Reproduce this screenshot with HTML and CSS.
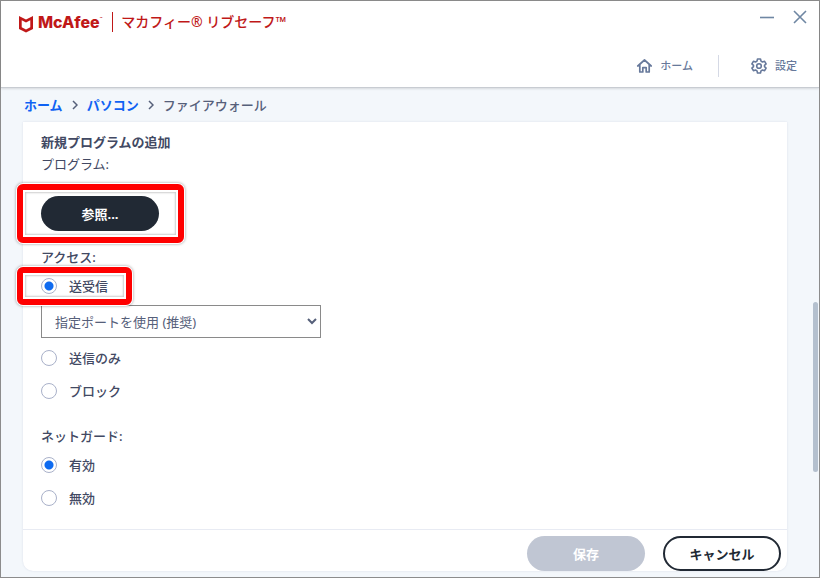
FILE: index.html
```html
<!DOCTYPE html>
<html lang="ja">
<head>
  <meta charset="UTF-8">
  <meta name="viewport" content="width=device-width, initial-scale=1.0">
  <title>マカフィー® リブセーフ™</title>
  <link rel="stylesheet" href="styles.css">
</head>
<body>
  <div class="window">
    <header class="header">
      <div class="title-bar">
        <div class="brand">
          <svg class="shield" width="14" height="17" viewBox="0 0 14 17">
            <path d="M0 0 7 3.400 14 0V13L7 16.500 0 13ZM2.700 4.300V11.300L7 13.400 11.300 11.300V4.300L7 6.400Z" fill="#c01818" fill-rule="evenodd"/>
          </svg>
          <span class="logo">McAfee<span class="dot">™</span></span>
          <h1 class="product">マカフィー® リブセーフ™</h1>
        </div>
        <div class="window-buttons">
          <button type="button" aria-label="最小化">
            <svg width="14" height="14" viewBox="0 0 14 14"><path d="M0 7.500H14" stroke="#6f87a3" stroke-width="1.600"/></svg>
          </button>
          <button type="button" aria-label="閉じる">
            <svg width="14" height="14" viewBox="0 0 14 14"><path d="M1 1 13 13M13 1 1 13" stroke="#6f87a3" stroke-width="1.600"/></svg>
          </button>
        </div>
      </div>
      <nav class="nav">
        <a href="#">
          <svg width="16" height="16" viewBox="0 0 16 16" fill="none" stroke="#67799b" stroke-width="1.700" stroke-linejoin="round" stroke-linecap="round">
            <path d="M1.800 8 8.500 2 15.200 8M3.800 6.800V14H6.800V9.600H10.200V14H13.200V6.800"/>
          </svg>
          ホーム
        </a>
        <a href="#">
          <svg width="16" height="16" viewBox="0 0 16 16" fill="none" stroke="#67799b" stroke-width="1.600" stroke-linejoin="round">
            <path d="M6.500 1h3l.5 2.100 1.500.9 2.100-.7 1.500 2.600L13.500 7.400v1.200l1.600 1.500-1.500 2.600-2.100-.7-1.500.9L9.500 15h-3L6 12.900l-1.500-.9-2.100.7L.9 10.100 2.500 8.600V7.400L.9 5.900l1.500-2.600 2.100.7L6 3.100Z"/>
            <circle cx="8" cy="8" r="2.300"/>
          </svg>
          設定
        </a>
      </nav>
    </header>

    <nav class="breadcrumb">
      <a href="#">ホーム</a>
      <svg width="6" height="10" viewBox="0 0 6 10"><path d="M1 1 5 5 1 9" fill="none" stroke="#56607a" stroke-width="1.500"/></svg>
      <a href="#">パソコン</a>
      <svg width="6" height="10" viewBox="0 0 6 10"><path d="M1 1 5 5 1 9" fill="none" stroke="#56607a" stroke-width="1.500"/></svg>
      <span>ファイアウォール</span>
    </nav>

    <form class="card">
      <div class="card-body">
        <h2>新規プログラムの追加</h2>
        <p id="program-label">プログラム:</p>
        <div class="browse highlight">
          <button type="button" class="btn btn-dark" aria-describedby="program-label">参照...</button>
        </div>

        <fieldset class="access">
          <legend>アクセス:</legend>
          <label class="radio highlight"><input type="radio" name="access" checked>送受信</label>
          <select aria-label="ポート">
            <option>指定ポートを使用 (推奨)</option>
          </select>
          <label class="radio"><input type="radio" name="access">送信のみ</label>
          <label class="radio"><input type="radio" name="access">ブロック</label>
        </fieldset>

        <fieldset class="netguard">
          <legend>ネットガード:</legend>
          <label class="radio"><input type="radio" name="netguard" checked>有効</label>
          <label class="radio"><input type="radio" name="netguard">無効</label>
        </fieldset>
      </div>
      <div class="card-footer">
        <button type="submit" class="btn btn-save" disabled>保存</button>
        <button type="button" class="btn btn-cancel">キャンセル</button>
      </div>
    </form>
    <div class="scrollbar"></div>
  </div>
</body>
</html>
```
FILE: styles.css
```css
* {
  box-sizing: border-box;
}
body {
  margin: 0;
  font-family: "Noto Sans", "Noto Sans CJK JP", sans-serif;
  font-size: 13px;
  line-height: 22px;
  color: #424963;
}
button, select, input {
  font: inherit;
  margin: 0;
}
h1, h2, p, fieldset, legend {
  margin: 0;
  padding: 0;
  border: 0;
}
a {
  text-decoration: none;
}
.window {
  position: relative;
  display: flex;
  flex-direction: column;
  min-height: 100vh;
  padding-bottom: 6px;
  border: 1px solid #8c8c8c;
  background: #f3f7fb;
}

/* header */
.header {
  background: #fff;
  padding-bottom: 10px;
  border-bottom: 1px solid #c8ccd2;
  box-shadow: 0 1px 2px rgba(0, 0, 0, 0.12);
}
.title-bar {
  display: flex;
  justify-content: space-between;
  align-items: flex-start;
  padding: 9px 12px 0 18px;
}
.brand {
  display: flex;
  align-items: center;
  padding-top: 1px;
  color: #c01818;
}
.shield {
  margin-top: 4px;
}
.logo {
  margin-left: 5px;
  font-family: Inter, sans-serif;
  font-size: 16px;
  font-weight: 800;
}
.logo .dot {
  font-size: 4px;
  vertical-align: 8px;
  line-height: 1px;
}
.product {
  margin-left: 10px;
  padding-left: 8px;
  border-left: 1px solid #c01818;
  font-size: 14px;
  font-weight: 500;
  line-height: 20px;
}
.window-buttons {
  display: flex;
  gap: 19px;
}
.window-buttons button {
  padding: 0;
  border: 0;
  background: none;
  line-height: 0;
}
.nav {
  display: flex;
  justify-content: flex-end;
  margin-top: 22px;
  padding-right: 22px;
  font-size: 11px;
  font-weight: 500;
}
.nav a {
  display: flex;
  align-items: center;
  gap: 8px;
  color: #67799b;
}
.nav a + a {
  margin-left: 25px;
  padding-left: 32px;
  border-left: 1px solid #d5d9e5;
}

/* breadcrumb */
.breadcrumb {
  display: flex;
  align-items: center;
  gap: 9px;
  padding: 6px 23px;
  font-weight: 500;
  color: #56607a;
}
.breadcrumb a {
  color: #0f62f3;
  font-weight: 700;
}

/* card */
.card {
  flex: 1;
  display: flex;
  flex-direction: column;
  margin: 0 32px 0 22px;
  background: #fff;
  border-radius: 0 0 10px 10px;
  box-shadow: 0 0 2px rgba(60, 70, 120, 0.15);
}
.card-body {
  flex: 1;
  padding: 9px 18px 19px;
}
h2 {
  font-size: 13px;
  font-weight: 700;
}
.browse {
  width: 118px;
  margin: 21px 0 15px;
}
legend {
  font-weight: 500;
}
.radio {
  display: flex;
  align-items: center;
  gap: 12px;
  width: fit-content;
  margin-top: 11px;
  font-weight: 500;
}
legend + .radio {
  margin-top: 7px;
}
.radio input {
  appearance: none;
  width: 16px;
  height: 16px;
  border: 1px solid #a9b1c9;
  border-radius: 50%;
  background: #fff;
}
.radio input:checked {
  background: radial-gradient(circle, #0f6bf0 4px, #fff 5px);
}
select {
  display: block;
  width: 280px;
  height: 33px;
  margin: 8px 0 9px;
  padding: 0 0 0 9px;
  border: 1px solid #8a8a8a;
  background: #fff;
  color: #56607a;
}
select + .radio {
  margin-top: 0;
}
.netguard {
  margin-top: 23px;
}
.card-footer {
  display: flex;
  justify-content: flex-end;
  gap: 18px;
  padding: 6px 6px 0;
  border-top: 1px solid #e8ebf3;
}

/* buttons */
.btn {
  display: block;
  width: 118px;
  height: 35px;
  padding: 0;
  border: 0;
  border-radius: 18px;
  font-size: 13px;
  font-weight: 700;
}
.btn-dark {
  background: #212934;
  color: #fff;
}
.btn-save {
  background: #c0c6d3;
  color: #fff;
}
.btn-cancel {
  background: #fff;
  border: 2px solid #212934;
  color: #212934;
}

/* red frames over the steps */
.highlight {
  position: relative;
}
.highlight::after {
  content: "";
  position: absolute;
  inset: -12px -25px -12px -24px;
  border: 6px solid #f00;
  border-radius: 6px;
  box-shadow: 0 0 0 1px #fff, 0 0 3px 1px rgba(0, 0, 0, 0.4), inset 0 0 0 2px #fff, inset 0 0 2px 3px rgba(0, 0, 0, 0.2);
  pointer-events: none;
}
.radio.highlight::after {
  inset: -8px -24px -8px -24px;
}

.scrollbar {
  position: absolute;
  top: 301px;
  right: 1px;
  width: 5px;
  height: 170px;
  border-radius: 3px;
  background: #b4c0ce;
}
```
